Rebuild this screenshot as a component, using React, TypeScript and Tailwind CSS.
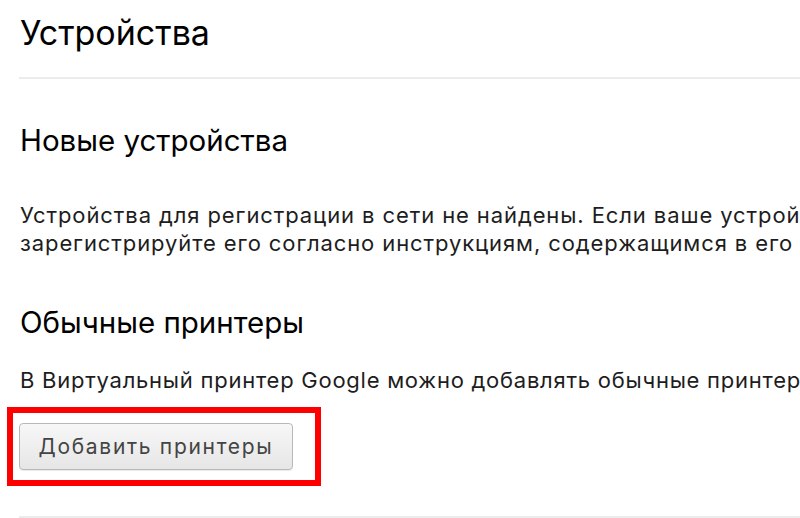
export default function App() {
  return (
    <div
      className="w-[800px] h-[518px] overflow-hidden bg-white text-[#1d1d1d]"
      style={{ fontFamily: 'Inter, "Liberation Sans", Arial, sans-serif' }}
    >
      <div className="w-[1300px] pl-[20px] whitespace-nowrap">
        <h1 className="text-[34px] leading-[40px] pt-[13px] text-black">Устройства</h1>
        <div className="mt-[24px] ml-[-1px] h-[2px] bg-[#ececec]" />

        <h2 className="text-[29.5px] leading-[34px] mt-[44px] text-black">Новые устройства</h2>
        <p className="text-[22px] leading-[28px] tracking-[0.9px] mt-[44px]">
          Устройства для регистрации в сети не найдены. Если ваше устройство включено и подключено к сети,
          <br />
          зарегистрируйте его согласно инструкциям, содержащимся в его руководстве.
        </p>

        <h2 className="text-[29.5px] leading-[34px] mt-[48px] text-black">Обычные принтеры</h2>
        <p className="text-[22px] leading-[28px] tracking-[0.75px] mt-[27px]">
          В Виртуальный принтер Google можно добавлять обычные принтеры, подключенные к компьютеру.
        </p>

        <div className="mt-[13px] ml-[-13px] inline-block border-[6px] border-[#fe0000] pt-[10px] pb-[10px] pl-[6px] pr-[22px]">
          <button className="h-[47px] w-[274px] rounded-[4px] border border-[#b8b8b8] bg-gradient-to-b from-[#f7f7f7] to-[#e6e6e6] text-[21px] tracking-[1.7px] text-[#444] shadow-[0_1px_0_rgba(0,0,0,0.08)]">
            Добавить принтеры
          </button>
        </div>

        <div className="mt-[30px] ml-[-1px] h-[2px] bg-[#ececec]" />
      </div>
    </div>
  );
}
